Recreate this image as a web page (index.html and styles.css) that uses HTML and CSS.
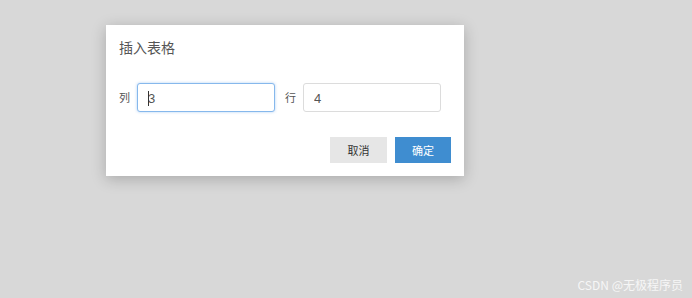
FILE: index.html
```html
<!DOCTYPE html>
<html lang="zh">
<head>
<meta charset="utf-8">
<link rel="stylesheet" href="styles.css">
</head>
<body>
<div class="page">
  <div class="dialog">
    <div class="title">插入表格</div>
    <div class="row">
      <label class="lbl">列</label>
      <div class="field focused"><span class="caret"></span><input class="inp" type="text" value="3"></div>
      <label class="lbl lbl2">行</label>
      <div class="field"><input class="inp" type="text" value="4"></div>
    </div>
    <div class="actions">
      <button class="btn cancel">取消</button>
      <button class="btn ok">确定</button>
    </div>
  </div>
  <div class="watermark">CSDN @无极程序员</div>
</div>
</body>
</html>
```
FILE: styles.css
```css
html, body {
  margin: 0;
  padding: 0;
  width: 692px;
  height: 298px;
  background: #d8d8d8;
  font-family: "Noto Sans CJK SC", "Liberation Sans", sans-serif;
  overflow: hidden;
}
.page {
  position: relative;
  width: 692px;
  height: 298px;
  padding: 25px 0 0 106px;
  box-sizing: border-box;
}
.dialog {
  width: 358px;
  height: 151px;
  box-sizing: border-box;
  background: #fff;
  padding: 13px 13px 13px 13px;
  box-shadow: 0 3px 14px rgba(0, 0, 0, 0.22);
  display: flex;
  flex-direction: column;
}
.title {
  font-size: 14px;
  line-height: 18px;
  height: 18px;
  color: #555;
}
.row {
  margin-top: 27px;
  display: flex;
  align-items: center;
  height: 29px;
}
.lbl {
  font-size: 11px;
  color: #555;
  width: 12px;
  margin-right: 6px;
  line-height: 29px;
}
.lbl2 {
  margin-left: 10px;
}
.field {
  position: relative;
  width: 138px;
  height: 29px;
  box-sizing: border-box;
  border: 1px solid #dcdcdc;
  border-radius: 3px;
  background: #fff;
}
.field.focused {
  border-color: #86b8ec;
  box-shadow: 0 0 3px rgba(80, 150, 230, 0.45);
}
.inp {
  border: 0;
  outline: none;
  background: transparent;
  width: 100%;
  height: 100%;
  box-sizing: border-box;
  padding: 0 0 0 10px;
  margin: 0;
  font-family: "Liberation Sans", sans-serif;
  font-size: 13px;
  color: #555;
}
.caret {
  position: absolute;
  left: 10px;
  top: 7px;
  width: 1px;
  height: 15px;
  background: #333;
}
.actions {
  margin-top: 25px;
  display: flex;
  justify-content: flex-end;
  gap: 8px;
}
.btn {
  width: 57px;
  height: 26px;
  border: 0;
  padding: 0;
  margin: 0;
  font-family: "Noto Sans CJK SC", "Liberation Sans", sans-serif;
  font-size: 11px;
  cursor: pointer;
}
.cancel {
  background: #e6e6e6;
  color: #333;
}
.ok {
  width: 56px;
  background: #3f8dd0;
  color: #fff;
}
.watermark {
  position: absolute;
  right: 9px;
  bottom: 5px;
  font-size: 12px;
  color: #f6f6f6;
}
```
